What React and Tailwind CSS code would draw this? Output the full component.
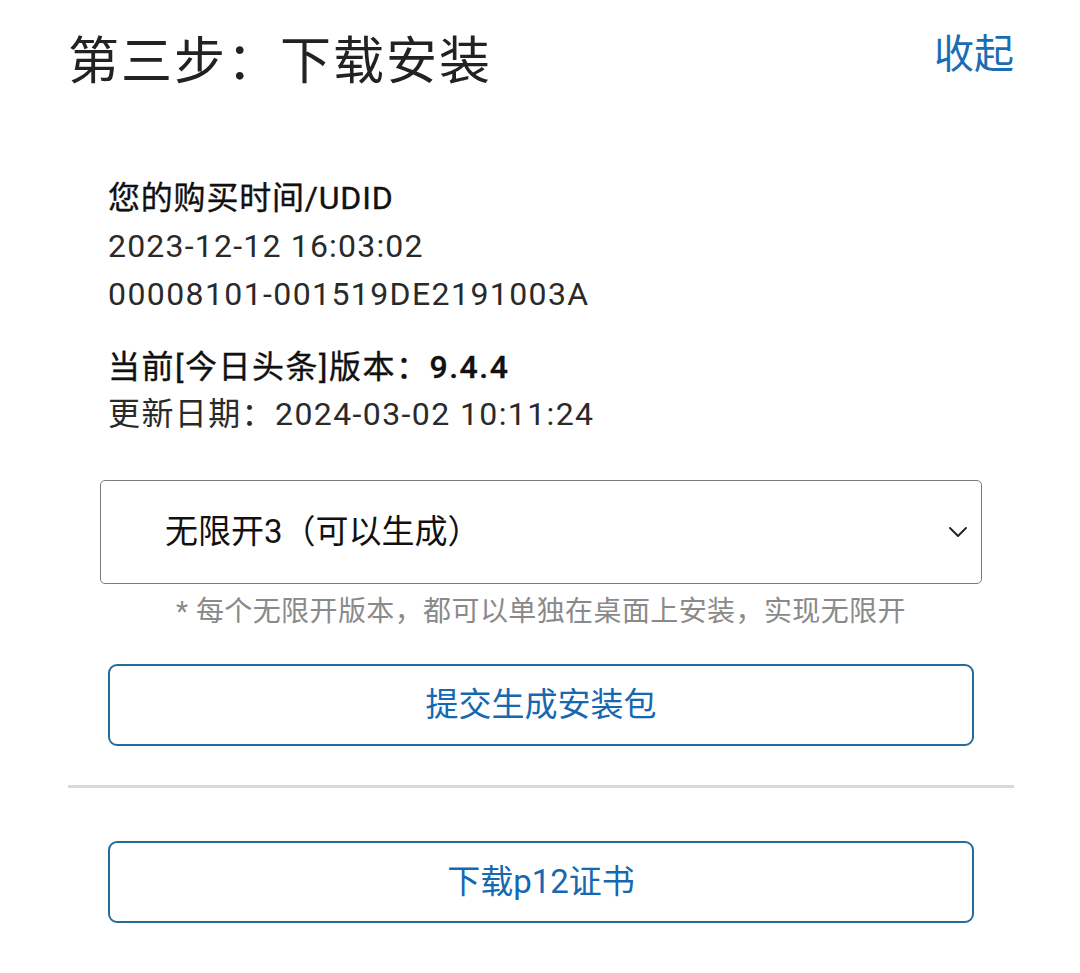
import { ChevronDown } from 'lucide-react'

const font = { fontFamily: 'Roboto, "Noto Sans CJK SC", "Noto Sans", sans-serif' }

function OutlineButton({ children }) {
  return (
    <button
      type="button"
      className="flex h-[82px] w-full items-center justify-center rounded-[9px] border-2 border-[#236c9c] bg-white text-[33px] text-[#1668b0]"
    >
      {children}
    </button>
  )
}

export default function App() {
  return (
    <div className="min-h-[973px] w-[1080px] bg-white" style={font}>
      <div className="ml-[68px] w-[946px] pt-[22px]">
        {/* header */}
        <div className="flex items-start justify-between">
          <h1 className="text-[51px] leading-[80px] tracking-[2px] text-[#222]">
            第三步：下载安装
          </h1>
          <button type="button" className="mt-[1px] text-[40px] leading-[64px] text-[#1b6db3]">
            收起
          </button>
        </div>

        {/* purchase info */}
        <div className="mt-[72px] pl-[40px] text-[32px] leading-[48px] text-[#2a2a2a]">
          <p className="tracking-[0.8px] text-[#111] [-webkit-text-stroke:0.35px_#111]">您的购买时间/UDID</p>
          <p className="tracking-[1.2px]">2023-12-12 16:03:02</p>
          <p className="tracking-[1.4px]">00008101-001519DE2191003A</p>

          <p className="mt-[25px] tracking-[1.5px] text-[#111] [-webkit-text-stroke:0.35px_#111]">
            当前[今日头条]版本：<span className="font-medium">9.4.4</span>
          </p>
          <p className="leading-[46px] tracking-[1.4px]">更新日期：2024-03-02 10:11:24</p>
        </div>

        {/* version select */}
        <div className="mt-[43px] pl-[32px] pr-[32px]">
          <div className="flex h-[104px] items-center justify-between rounded-[5px] border border-[#7a7a7a] pl-[64px] pr-[7px]">
            <span className="text-[33px] text-[#111]">无限开3（可以生成）</span>
            <ChevronDown size={32} strokeWidth={1.4} className="text-[#222]" />
          </div>
          <p className="mt-[11px] text-center text-[28px] leading-[34px] tracking-[0.4px] text-[#8a8a8a]">
            * 每个无限开版本，都可以单独在桌面上安装，实现无限开
          </p>
        </div>

        <div className="mt-[35px] px-[40px]">
          <OutlineButton>提交生成安装包</OutlineButton>
        </div>

        <div className="mt-[39px] h-[3px] bg-[#d9d9d9]" />

        <div className="mt-[53px] px-[40px]">
          <OutlineButton>下载p12证书</OutlineButton>
        </div>
      </div>
    </div>
  )
}
